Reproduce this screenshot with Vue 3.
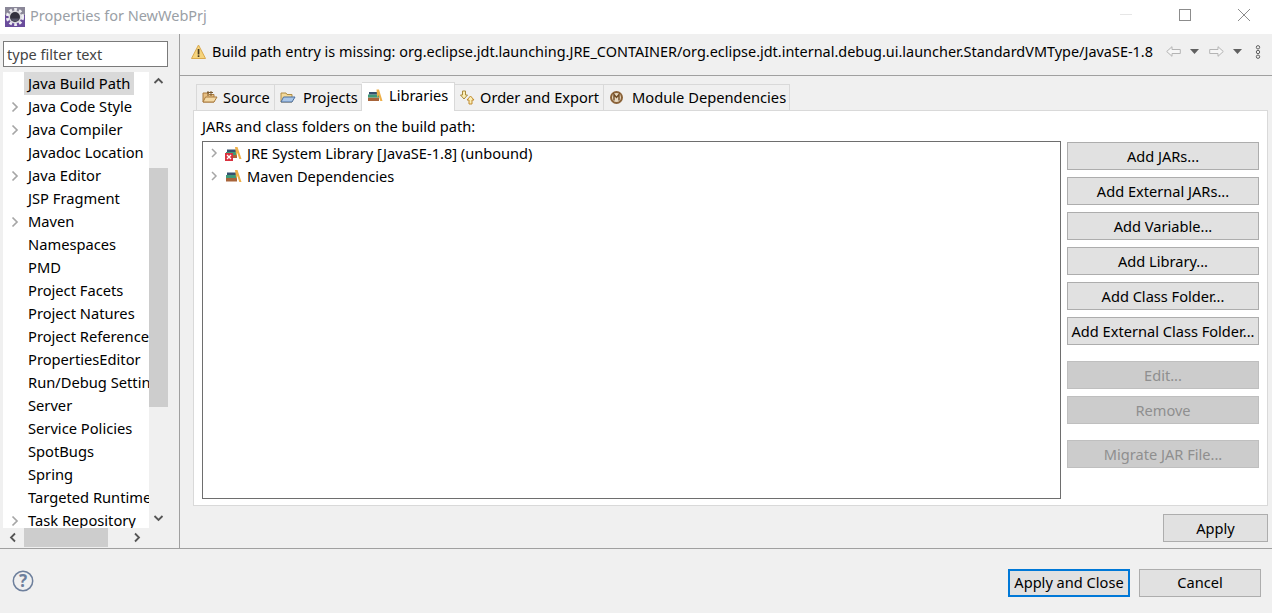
<script setup>
const treeRows = [
  { label: 'Java Build Path', selected: true },
  { label: 'Java Code Style', arrow: true },
  { label: 'Java Compiler', arrow: true },
  { label: 'Javadoc Location' },
  { label: 'Java Editor', arrow: true },
  { label: 'JSP Fragment' },
  { label: 'Maven', arrow: true },
  { label: 'Namespaces' },
  { label: 'PMD' },
  { label: 'Project Facets' },
  { label: 'Project Natures' },
  { label: 'Project References' },
  { label: 'PropertiesEditor' },
  { label: 'Run/Debug Settings' },
  { label: 'Server' },
  { label: 'Service Policies' },
  { label: 'SpotBugs' },
  { label: 'Spring' },
  { label: 'Targeted Runtimes' },
  { label: 'Task Repository', arrow: true },
]
const groups = [
  { cls: 'g1', items: ['Add JARs...', 'Add External JARs...', 'Add Variable...', 'Add Library...', 'Add Class Folder...', 'Add External Class Folder...'] },
  { cls: 'g2', items: ['Edit...', 'Remove'], disabled: true },
  { cls: 'g3', items: ['Migrate JAR File...'], disabled: true },
]
</script>

<template>
  <div class="win">
    <header class="titlebar">
      <svg class="appicon" width="20" height="20" viewBox="0 0 20 20">
        <rect width="20" height="20" fill="#6a4c9c"/>
        <rect width="20" height="8" fill="#8a8798"/>
        <circle cx="10" cy="10" r="7.600" fill="none" stroke="#eeeef2" stroke-width="3" stroke-dasharray="2.700 2.270"/>
        <circle cx="10" cy="10" r="6.500" fill="#d8d8de"/>
        <circle cx="10" cy="10" r="5" fill="#33323f"/>
        <path d="M5.500 11.500a5 5 0 0 0 9 0z" fill="#555468"/>
      </svg>
      <span class="title">Properties for NewWebPrj</span>
      <span class="winbtns">
        <svg width="12" height="12" viewBox="0 0 12 12"><path d="M0 5.500h12" stroke="#e6e6e6"/></svg>
        <svg width="12" height="12" viewBox="0 0 12 12"><rect x=".5" y=".5" width="11" height="11" fill="none" stroke="#8c8c8c"/></svg>
        <svg width="12" height="12" viewBox="0 0 12 12"><path d="M0 0l12 12M12 0L0 12" stroke="#8c8c8c" fill="none"/></svg>
      </span>
    </header>

    <div class="main">
      <aside class="left">
        <div class="filter">type filter text</div>
        <div class="treewrap">
          <div class="treecol">
            <div class="tree">
              <div v-for="r in treeRows" :key="r.label" class="row">
                <svg v-if="r.arrow" class="chev" width="8" height="12" viewBox="0 0 8 12"><path d="M1.500 1.500L6 6l-4.500 4.500" fill="none" stroke="#a6a6a6" stroke-width="1.700"/></svg>
                <span class="rowlabel" :class="{ sel: r.selected }">{{ r.label }}</span>
              </div>
            </div>
            <div class="hbar">
              <svg width="21" height="19" viewBox="0 0 21 19"><path d="M12 5.500L8 9.500l4 4" fill="none" stroke="#555" stroke-width="1.800"/></svg>
              <div class="hthumb"></div>
              <svg class="hright" width="20" height="19" viewBox="0 0 20 19"><path d="M9 5.500l4 4-4 4" fill="none" stroke="#555" stroke-width="1.800"/></svg>
            </div>
          </div>
          <div class="vbar">
            <svg width="19" height="19" viewBox="0 0 19 19"><path d="M5.500 11l4-4 4 4" fill="none" stroke="#555" stroke-width="1.800"/></svg>
            <div class="vthumb"></div>
            <svg class="vdown" width="19" height="19" viewBox="0 0 19 19"><path d="M5.500 7l4 4 4-4" fill="none" stroke="#555" stroke-width="1.800"/></svg>
          </div>
        </div>
      </aside>

      <section class="right">
        <div class="msgbar">
          <svg class="warn" width="15" height="16" viewBox="0 0 15 16">
            <path d="M7.500 1L14.500 14.500H.5z" fill="#f6d47c" stroke="#d9a94e" stroke-linejoin="round"/>
            <rect x="6.700" y="5" width="1.700" height="5.500" fill="#4a3a20"/>
            <rect x="6.700" y="11.300" width="1.700" height="1.700" fill="#4a3a20"/>
          </svg>
          <span class="msg">Build path entry is missing: org.eclipse.jdt.launching.JRE_CONTAINER/org.eclipse.jdt.internal.debug.ui.launcher.StandardVMType/JavaSE-1.8</span>
          <span class="nav">
            <svg width="15" height="11" viewBox="0 0 15 11"><path d="M.7 5.500L6 .7v2.800h8.300v4H6v2.800z" fill="#f6f6f6" stroke="#b4b4b4"/></svg>
            <svg class="drop" width="9" height="5" viewBox="0 0 9 5"><path d="M0 0h9L4.500 5z" fill="#606060"/></svg>
            <svg class="fwd" width="15" height="11" viewBox="0 0 15 11"><path d="M14.300 5.500L9 .7v2.800H.7v4H9v2.800z" fill="#f6f6f6" stroke="#b4b4b4"/></svg>
            <svg class="drop" width="9" height="5" viewBox="0 0 9 5"><path d="M0 0h9L4.500 5z" fill="#606060"/></svg>
            <svg class="kebab" width="6" height="14" viewBox="0 0 6 14"><g fill="none" stroke="#606060"><circle cx="3" cy="2.300" r="1.700"/><circle cx="3" cy="7" r="1.700"/><circle cx="3" cy="11.700" r="1.700"/></g></svg>
          </span>
        </div>

        <div class="content">
          <div class="tabs">
            <div class="tab t-source">
              <svg width="16" height="14" viewBox="0 0 16 14">
                <path d="M1 3h5l1 1.500h5V12H1z" fill="#e7bf83" stroke="#a97b3e"/>
                <path d="M1 12l2.500-5H15l-3 5z" fill="#f3d9a6" stroke="#a97b3e"/>
                <path d="M6 1v5M9 1v5M5 2.500h6" stroke="#7a5a30" fill="none"/>
              </svg>
              <span>Source</span>
            </div>
            <div class="tab t-projects">
              <svg width="16" height="14" viewBox="0 0 16 14">
                <path d="M1 3h5l1 1.500h5V12H1z" fill="#f2d99a" stroke="#b08c45"/>
                <path d="M1 12l2.500-5H15l-3 5z" fill="#a9c6e8" stroke="#4d6f9e"/>
              </svg>
              <span>Projects</span>
            </div>
            <div class="tab active t-libs">
              <svg width="16" height="14" viewBox="0 0 16 14">
                <rect x="1" y="9.500" width="11" height="3.500" fill="#a8643a"/>
                <rect x="1" y="6.500" width="11" height="3" fill="#3f9a78"/>
                <rect x="2" y="4" width="9" height="2.500" fill="#35506f"/>
                <path d="M9.500 1.500h2.500L15.500 13h-2.200l-2-6-1 3z" fill="#eeb04a"/>
              </svg>
              <span>Libraries</span>
            </div>
            <div class="tab t-order">
              <svg width="15" height="15" viewBox="0 0 15 15">
                <path d="M2.500 1h3v4h2L4 9 .5 5h2z" fill="#fbeeb5" stroke="#a98a3e"/>
                <path d="M10.500 6l3.500 4h-2v4H9v-4H7z" fill="#fbeeb5" stroke="#c08a2e"/>
              </svg>
              <span>Order and Export</span>
            </div>
            <div class="tab t-mod">
              <svg width="15" height="15" viewBox="0 0 15 15">
                <circle cx="7.500" cy="7.500" r="6.500" fill="#8a6238"/>
                <circle cx="7.500" cy="7.500" r="4.500" fill="#e8d9c2"/>
                <path d="M5 10.500v-6l2.500 3 2.500-3v6" fill="none" stroke="#6e4a24" stroke-width="1.400"/>
              </svg>
              <span class="modlabel">Module Dependencies</span>
            </div>
          </div>

          <div class="panel">
            <div class="panel-label">JARs and class folders on the build path:</div>
            <div class="panel-body">
              <div class="list">
                <div class="lrow">
                  <svg class="lchev" width="8" height="12" viewBox="0 0 8 12"><path d="M2 2l4 4-4 4" fill="none" stroke="#a6a6a6" stroke-width="1.500"/></svg>
                  <svg class="libicon" width="17" height="16" viewBox="0 0 17 16">
                    <rect x="1" y="10" width="11" height="3" fill="#a8643a"/>
                    <rect x="1" y="7" width="11" height="3" fill="#3f9a78"/>
                    <rect x="2" y="4.500" width="9" height="2.500" fill="#35506f"/>
                    <path d="M10 2h2.500L16.500 14h-2.200l-2-6-1 3z" fill="#eeb04a"/>
                    <rect x="0" y="8" width="8" height="8" fill="#d9323f"/>
                    <path d="M2 10l4 4M6 10l-4 4" stroke="#fff" stroke-width="1.300"/>
                  </svg>
                  <span>JRE System Library [JavaSE-1.8] (unbound)</span>
                </div>
                <div class="lrow">
                  <svg class="lchev" width="8" height="12" viewBox="0 0 8 12"><path d="M2 2l4 4-4 4" fill="none" stroke="#a6a6a6" stroke-width="1.500"/></svg>
                  <svg class="libicon" width="17" height="16" viewBox="0 0 17 16">
                    <rect x="1" y="10" width="11" height="3.500" fill="#a8643a"/>
                    <rect x="1" y="7" width="11" height="3" fill="#3f9a78"/>
                    <rect x="2" y="4.500" width="9" height="2.500" fill="#35506f"/>
                    <path d="M10 2h2.500L16.500 14h-2.200l-2-6-1 3z" fill="#eeb04a"/>
                  </svg>
                  <span>Maven Dependencies</span>
                </div>
              </div>
              <div class="btns">
                <div v-for="g in groups" :key="g.cls" class="btngroup" :class="g.cls">
                  <div v-for="b in g.items" :key="b" class="btn" :class="{ dis: g.disabled }">{{ b }}</div>
                </div>
              </div>
            </div>
          </div>

          <div class="applyrow"><div class="btn apply">Apply</div></div>
        </div>
      </section>
    </div>

    <footer class="footer">
      <svg class="help" width="22" height="22" viewBox="0 0 22 22">
        <circle cx="11" cy="11" r="9.700" fill="none" stroke="#6d7f9c" stroke-width="1.500"/>
        <text x="11" y="16.500" text-anchor="middle" class="helpq">?</text>
      </svg>
      <div class="fbtns">
        <div class="btn primary">Apply and Close</div>
        <div class="btn cancel">Cancel</div>
      </div>
    </footer>
  </div>
</template>

<style>
html, body { margin: 0; background: #f0f0f0; overflow: hidden; }
</style>

<style scoped>
.win {
  width: 1272px; height: 613px; background: #f0f0f0; display: flex; flex-direction: column;
  font-family: "Noto Sans", "Open Sans", sans-serif; font-size: 14.6px; color: #000; overflow: hidden;
}
.titlebar {
  height: 34px; background: #fff; display: flex; align-items: center; padding: 0 0 4px 5px; flex: none; box-sizing: border-box;
}
.appicon { margin-right: 5px; margin-top: 4px; }
.title { color: #9aa0a6; font-size: 14.5px; }
.winbtns { margin-left: auto; display: flex; gap: 47px; padding-right: 22px; align-items: center; margin-top: -1px; }
.main { flex: none; height: 514px; display: flex; }
.left {
  width: 165px; flex: none; border-right: 1px solid #a0a0a0; padding: 7px 11px 0 3px;
  display: flex; flex-direction: column;
}
.filter {
  height: 24px; border: 1px solid #7a7a7a; background: #fff; line-height: 24px; padding-left: 3px; color: #444; flex: none; font-size: 14.5px;
}
.treewrap { margin-top: 5px; display: flex; height: 475px; }
.treecol { width: 146px; display: flex; flex-direction: column; flex: none; }
.tree { height: 456px; background: #fff; overflow: hidden; font-size: 14.7px; }
.row { height: 23px; line-height: 23px; position: relative; padding-left: 21px; white-space: nowrap; }
.chev { position: absolute; left: 8px; top: 6px; }
.rowlabel { display: inline-block; padding: 0 4px; }
.rowlabel.sel { background: #d9d9d9; }
.hbar { height: 19px; background: #f0f0f0; display: flex; align-items: center; }
.hbar svg { flex: none; }
.hthumb { width: 84px; height: 19px; background: #cdcdcd; }
.hright { margin-left: auto; margin-right: 3px; }
.vbar { width: 19px; height: 456px; background: #f0f0f0; display: flex; flex-direction: column; flex: none; }
.vthumb { margin-top: 77px; height: 239px; background: #cdcdcd; }
.vdown { margin-top: auto; }
.right { flex: 1; min-width: 0; display: flex; flex-direction: column; }
.msgbar {
  height: 35px; border-bottom: 1px solid #a0a0a0; display: flex; align-items: center; padding: 0 0 6px 11px; flex: none;
}
.warn { margin-right: 6px; flex: none; }
.msg { white-space: nowrap; font-size: 14.44px; }
.nav { display: flex; align-items: center; margin-left: 13px; }
.drop { margin-left: 9px; }
.fwd { margin-left: 10px; }
.kebab { margin-left: 13px; }
.content { flex: 1; padding: 0 4px 0 13px; display: flex; flex-direction: column; }
.tabs { display: flex; align-items: flex-end; height: 34px; padding-left: 3px; flex: none; position: relative; z-index: 1; }
.tab {
  height: 24px; padding-bottom: 1px; border: 1px solid #d9d9d9; border-bottom: none; border-left: none; display: flex; align-items: center;
  padding-left: 5px; gap: 6px; white-space: nowrap;
}
.t-source { width: 72px; border-left: 1px solid #d9d9d9; gap: 5px; }
.t-projects { width: 81px; gap: 7px; }
.tab.active { height: 24px; padding-bottom: 4px; background: #fff; width: 87px; margin-bottom: -1px; }
.t-order { width: 143px; gap: 5px; }
.t-mod { width: 180px; gap: 8px; }
.modlabel { font-size: 14.7px; }
.panel { height: 396px; box-sizing: border-box; border: 1px solid #d9d9d9; background: #fff; flex: none; padding: 0 7px 0 8px; }
.panel-label { height: 30px; line-height: 31px; }
.panel-body { display: flex; }
.list { width: 857px; height: 356px; border: 1px solid #6e6e6e; flex: none; }
.lrow { height: 21px; padding-bottom: 2px; display: flex; align-items: center; white-space: nowrap; font-size: 14.6px; }
.lchev { margin-left: 7px; margin-right: 7px; }
.libicon { margin-right: 5px; }
.btns { margin-left: 6px; width: 192px; padding-top: 1px; flex: none; }
.btngroup { display: flex; flex-direction: column; gap: 7px; }
.g2 { margin-top: 16px; }
.g3 { margin-top: 16px; }
.btn {
  height: 28px; box-sizing: border-box; border: 1px solid #adadad; background: #e1e1e1; text-align: center; line-height: 26px; white-space: nowrap;
}
.btn.dis { background: #cccccc; border-color: #bfbfbf; color: #8f8f8f; }
.applyrow { display: flex; justify-content: flex-end; margin-top: 8px; }
.apply { width: 105px; }
.footer {
  height: 64px; border-top: 1px solid #a0a0a0; display: flex; align-items: center; flex: none; padding: 0 11px 0 12px;
}
.help { flex: none; }
.helpq { font-size: 17px; font-weight: 700; fill: #6d7f9c; font-family: "Noto Sans", sans-serif; }
.fbtns { margin-left: auto; display: flex; gap: 9px; margin-top: 4px; }
.primary { width: 122px; border: 2px solid #0078d7; line-height: 22px; }
.cancel { width: 122px; line-height: 24px; }
</style>
